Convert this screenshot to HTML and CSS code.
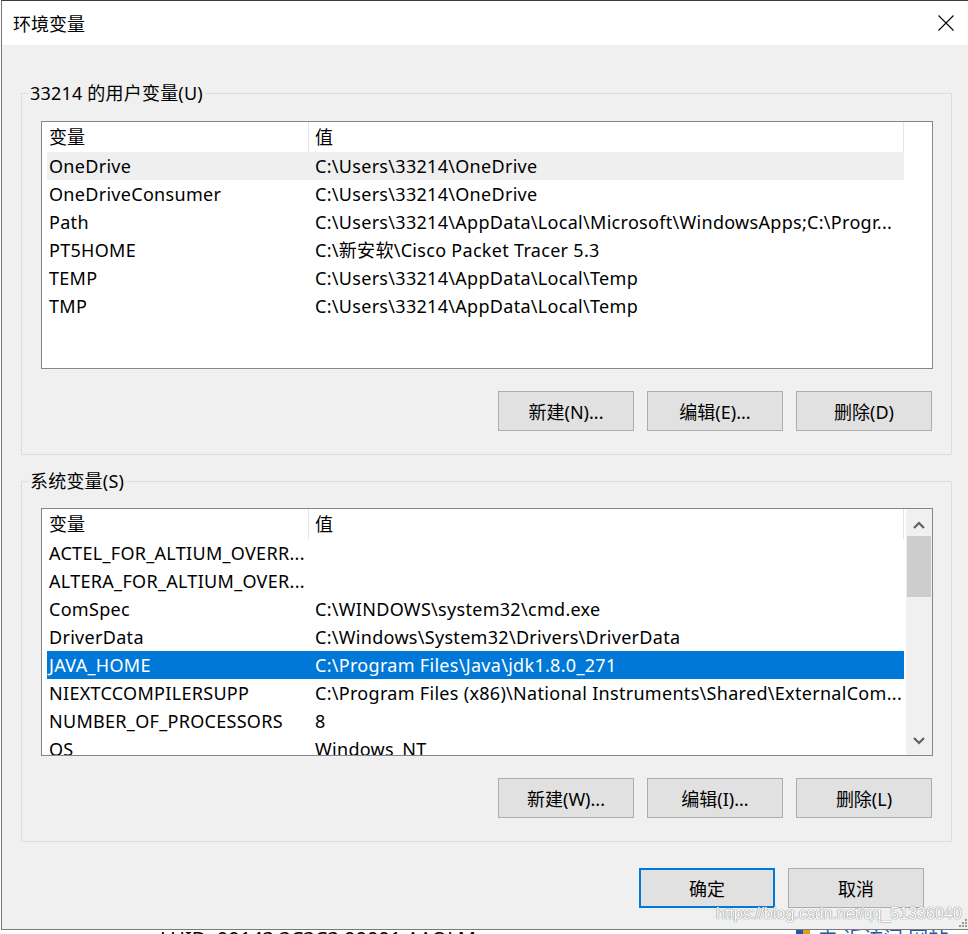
FILE: index.html
```html
<!DOCTYPE html>
<html lang="zh-CN">
<head>
    <meta charset="UTF-8">
    <title>环境变量</title>
    <link rel="stylesheet" href="styles.css">
</head>
<body>
    <div class="dialog">
        <div class="titlebar">
            <span class="title">环境变量</span>
            <span class="close">
                <svg width="16" height="16" viewBox="0 0 16 16"><path d="M0.5 0.5 L15.5 15.5 M15.5 0.5 L0.5 15.5" stroke="#000" stroke-width="1.1" fill="none"/></svg>
            </span>
        </div>

        <fieldset class="group group-user">
            <legend>33214 的用户变量(U)</legend>
            <div class="listview">
                <div class="lv-main">
                    <div class="lv-head">
                        <div class="hc hc-name">变量</div>
                        <div class="hc hc-value">值</div>
                    </div>
                    <div class="lv-row inactive-sel"><div class="c-name">OneDrive</div><div class="c-value">C:\Users\33214\OneDrive</div></div>
                    <div class="lv-row"><div class="c-name">OneDriveConsumer</div><div class="c-value">C:\Users\33214\OneDrive</div></div>
                    <div class="lv-row"><div class="c-name">Path</div><div class="c-value">C:\Users\33214\AppData\Local\Microsoft\WindowsApps;C:\Progr...</div></div>
                    <div class="lv-row"><div class="c-name">PT5HOME</div><div class="c-value">C:\新安软\Cisco Packet Tracer 5.3</div></div>
                    <div class="lv-row"><div class="c-name">TEMP</div><div class="c-value">C:\Users\33214\AppData\Local\Temp</div></div>
                    <div class="lv-row"><div class="c-name">TMP</div><div class="c-value">C:\Users\33214\AppData\Local\Temp</div></div>
                </div>
            </div>
            <div class="btn-row">
                <button class="btn">新建(N)...</button>
                <button class="btn">编辑(E)...</button>
                <button class="btn">删除(D)</button>
            </div>
        </fieldset>

        <fieldset class="group group-system">
            <legend>系统变量(S)</legend>
            <div class="listview">
                <div class="lv-main">
                    <div class="lv-head">
                        <div class="hc hc-name">变量</div>
                        <div class="hc hc-value">值</div>
                    </div>
                    <div class="lv-row"><div class="c-name">ACTEL_FOR_ALTIUM_OVERR...</div><div class="c-value"></div></div>
                    <div class="lv-row"><div class="c-name">ALTERA_FOR_ALTIUM_OVER...</div><div class="c-value"></div></div>
                    <div class="lv-row"><div class="c-name">ComSpec</div><div class="c-value">C:\WINDOWS\system32\cmd.exe</div></div>
                    <div class="lv-row"><div class="c-name">DriverData</div><div class="c-value">C:\Windows\System32\Drivers\DriverData</div></div>
                    <div class="lv-row selected"><div class="c-name">JAVA_HOME</div><div class="c-value">C:\Program Files\Java\jdk1.8.0_271</div></div>
                    <div class="lv-row"><div class="c-name">NIEXTCCOMPILERSUPP</div><div class="c-value">C:\Program Files (x86)\National Instruments\Shared\ExternalCom...</div></div>
                    <div class="lv-row"><div class="c-name">NUMBER_OF_PROCESSORS</div><div class="c-value">8</div></div>
                    <div class="lv-row"><div class="c-name">OS</div><div class="c-value">Windows_NT</div></div>
                </div>
                <div class="vscroll">
                    <div class="sb-btn sb-up">
                        <svg width="12" height="8" viewBox="0 0 12 8"><path d="M1 7 L6 2 L11 7" stroke="#606060" stroke-width="2.2" fill="none"/></svg>
                    </div>
                    <div class="sb-thumb"></div>
                    <div class="sb-track"></div>
                    <div class="sb-btn sb-down">
                        <svg width="12" height="8" viewBox="0 0 12 8"><path d="M1 1 L6 6 L11 1" stroke="#606060" stroke-width="2.2" fill="none"/></svg>
                    </div>
                </div>
            </div>
            <div class="btn-row">
                <button class="btn">新建(W)...</button>
                <button class="btn">编辑(I)...</button>
                <button class="btn">删除(L)</button>
            </div>
        </fieldset>

        <div class="footer">
            <button class="btn btn-default">确定</button>
            <button class="btn">取消</button>
        </div>

        <div class="watermark">https://blog.csdn.net/qq_51336040</div>
        <div class="grip">
            <svg width="10" height="10" viewBox="0 0 10 10" fill="#9a9a9a">
                <rect x="7" y="1" width="2" height="2"/>
                <rect x="4" y="4" width="2" height="2"/><rect x="7" y="4" width="2" height="2"/>
                <rect x="1" y="7" width="2" height="2"/><rect x="4" y="7" width="2" height="2"/><rect x="7" y="7" width="2" height="2"/>
            </svg>
        </div>
    </div>

    <div class="desktop">
        <span class="desk-text">LUID: 00143 3C3C3 00001 AAOLM</span>
        <span class="desk-icon"></span>
        <span class="desk-text desk-right">由 近访问 网站</span>
    </div>
</body>
</html>
```

FILE: styles.css
```css
* {
    box-sizing: border-box;
}
html, body {
    margin: 0;
}
body {
    width: 968px;
    height: 934px;
    overflow: hidden;
    background-color: #fafafa;
    font-family: "Noto Sans", "Noto Sans CJK SC", sans-serif;
    font-size: 18px;
    color: #000;
}

/* window frame */
.dialog {
    position: relative;
    margin-left: 1px;
    width: 970px;
    height: 930px;
    background-color: #f0f0f0;
    border: 1px solid #7a7a7a;
    border-top-color: #3a3a3a;
}
.titlebar {
    display: flex;
    align-items: center;
    justify-content: space-between;
    height: 44px;
    padding-left: 11px;
    background-color: #fff;
}
.title {
    font-family: "Noto Sans CJK SC", sans-serif;
    font-size: 18px;
    line-height: 24px;
}
.close {
    display: flex;
    align-items: center;
    justify-content: center;
    width: 48px;
    height: 44px;
}

/* group boxes */
.group {
    margin: 0 18px 0 19px;
    padding: 16px 19px 23px 19px;
    border: 1px solid #dcdcdc;
    min-width: 0;
}
.group-user {
    margin-top: 36px;
}
.group-system {
    margin-top: 14px;
    padding-top: 15px;
}
.group legend {
    margin-left: -13px;
    padding: 0 2px;
    line-height: 24px;
    letter-spacing: 0.2px;
}

/* list views */
.listview {
    display: flex;
    height: 248px;
    margin-right: -1px;
    background-color: #fff;
    border: 1px solid #828790;
    overflow: hidden;
}
.lv-main {
    flex: 1;
    overflow: hidden;
}
.lv-head {
    display: flex;
    height: 30px;
    line-height: 30px;
}
.hc {
    border-right: 1px solid #e5e5e5;
    white-space: nowrap;
}
.hc-name {
    width: 267px;
    padding-left: 7px;
}
.hc-value {
    width: 595px;
    padding-left: 6px;
}
.lv-row {
    display: flex;
    margin-left: 5px;
    width: 857px;
    height: 28px;
    line-height: 28px;
    white-space: nowrap;
    letter-spacing: 0.3px;
}
.c-name {
    width: 261px;
    padding-left: 2px;
    overflow: hidden;
}
.c-value {
    flex: 1;
    padding-left: 7px;
    overflow: hidden;
}
.inactive-sel {
    background-color: #efefef;
}
.selected {
    background-color: #0078d7;
    color: #fff;
}

/* vertical scroll bar */
.vscroll {
    display: flex;
    flex-direction: column;
    width: 26px;
    background-color: #f0f0f0;
}
.sb-btn {
    display: flex;
    justify-content: center;
    height: 27px;
}
.sb-up {
    padding-top: 12px;
}
.sb-down {
    padding-top: 9px;
}
.sb-thumb {
    height: 61px;
    margin: 0 1px 0 1px;
    background-color: #cdcdcd;
}
.sb-track {
    flex: 1;
}

/* buttons */
.btn-row {
    display: flex;
    justify-content: flex-end;
    gap: 13px;
    margin-top: 22px;
}
.btn {
    width: 136px;
    height: 40px;
    padding: 0;
    background-color: #e1e1e1;
    border: 1px solid #adadad;
    font-family: "Noto Sans", "Noto Sans CJK SC", sans-serif;
    font-size: 18px;
    color: #000;
}
.btn-default {
    border: 2px solid #0078d7;
}
.footer {
    display: flex;
    justify-content: flex-end;
    gap: 13px;
    margin-top: 26px;
    padding-right: 46px;
}

/* overlays on the dialog */
.watermark {
    position: absolute;
    left: 714px;
    top: 903px;
    font-family: "Liberation Sans", Arial, sans-serif;
    font-size: 16px;
    line-height: 20px;
    color: #fff;
    text-shadow: 0 0 1px #7a7a7a, 0 0 1px #7a7a7a;
}
.grip {
    position: absolute;
    left: 956px;
    top: 917px;
    line-height: 0;
}

/* desktop behind the dialog */
.desktop {
    display: flex;
    height: 4px;
    overflow: hidden;
    padding-left: 160px;
    background-color: #fff;
}
.desk-text {
    margin-top: -1px;
    font-size: 20px;
    line-height: 20px;
    white-space: nowrap;
}
.desk-icon {
    margin-left: 320px;
    width: 14px;
    height: 4px;
    background: linear-gradient(90deg, #1e5aa8 50%, #d9a020 50%);
}
.desk-right {
    margin-left: 8px;
    color: #1e5aa8;
}
```
